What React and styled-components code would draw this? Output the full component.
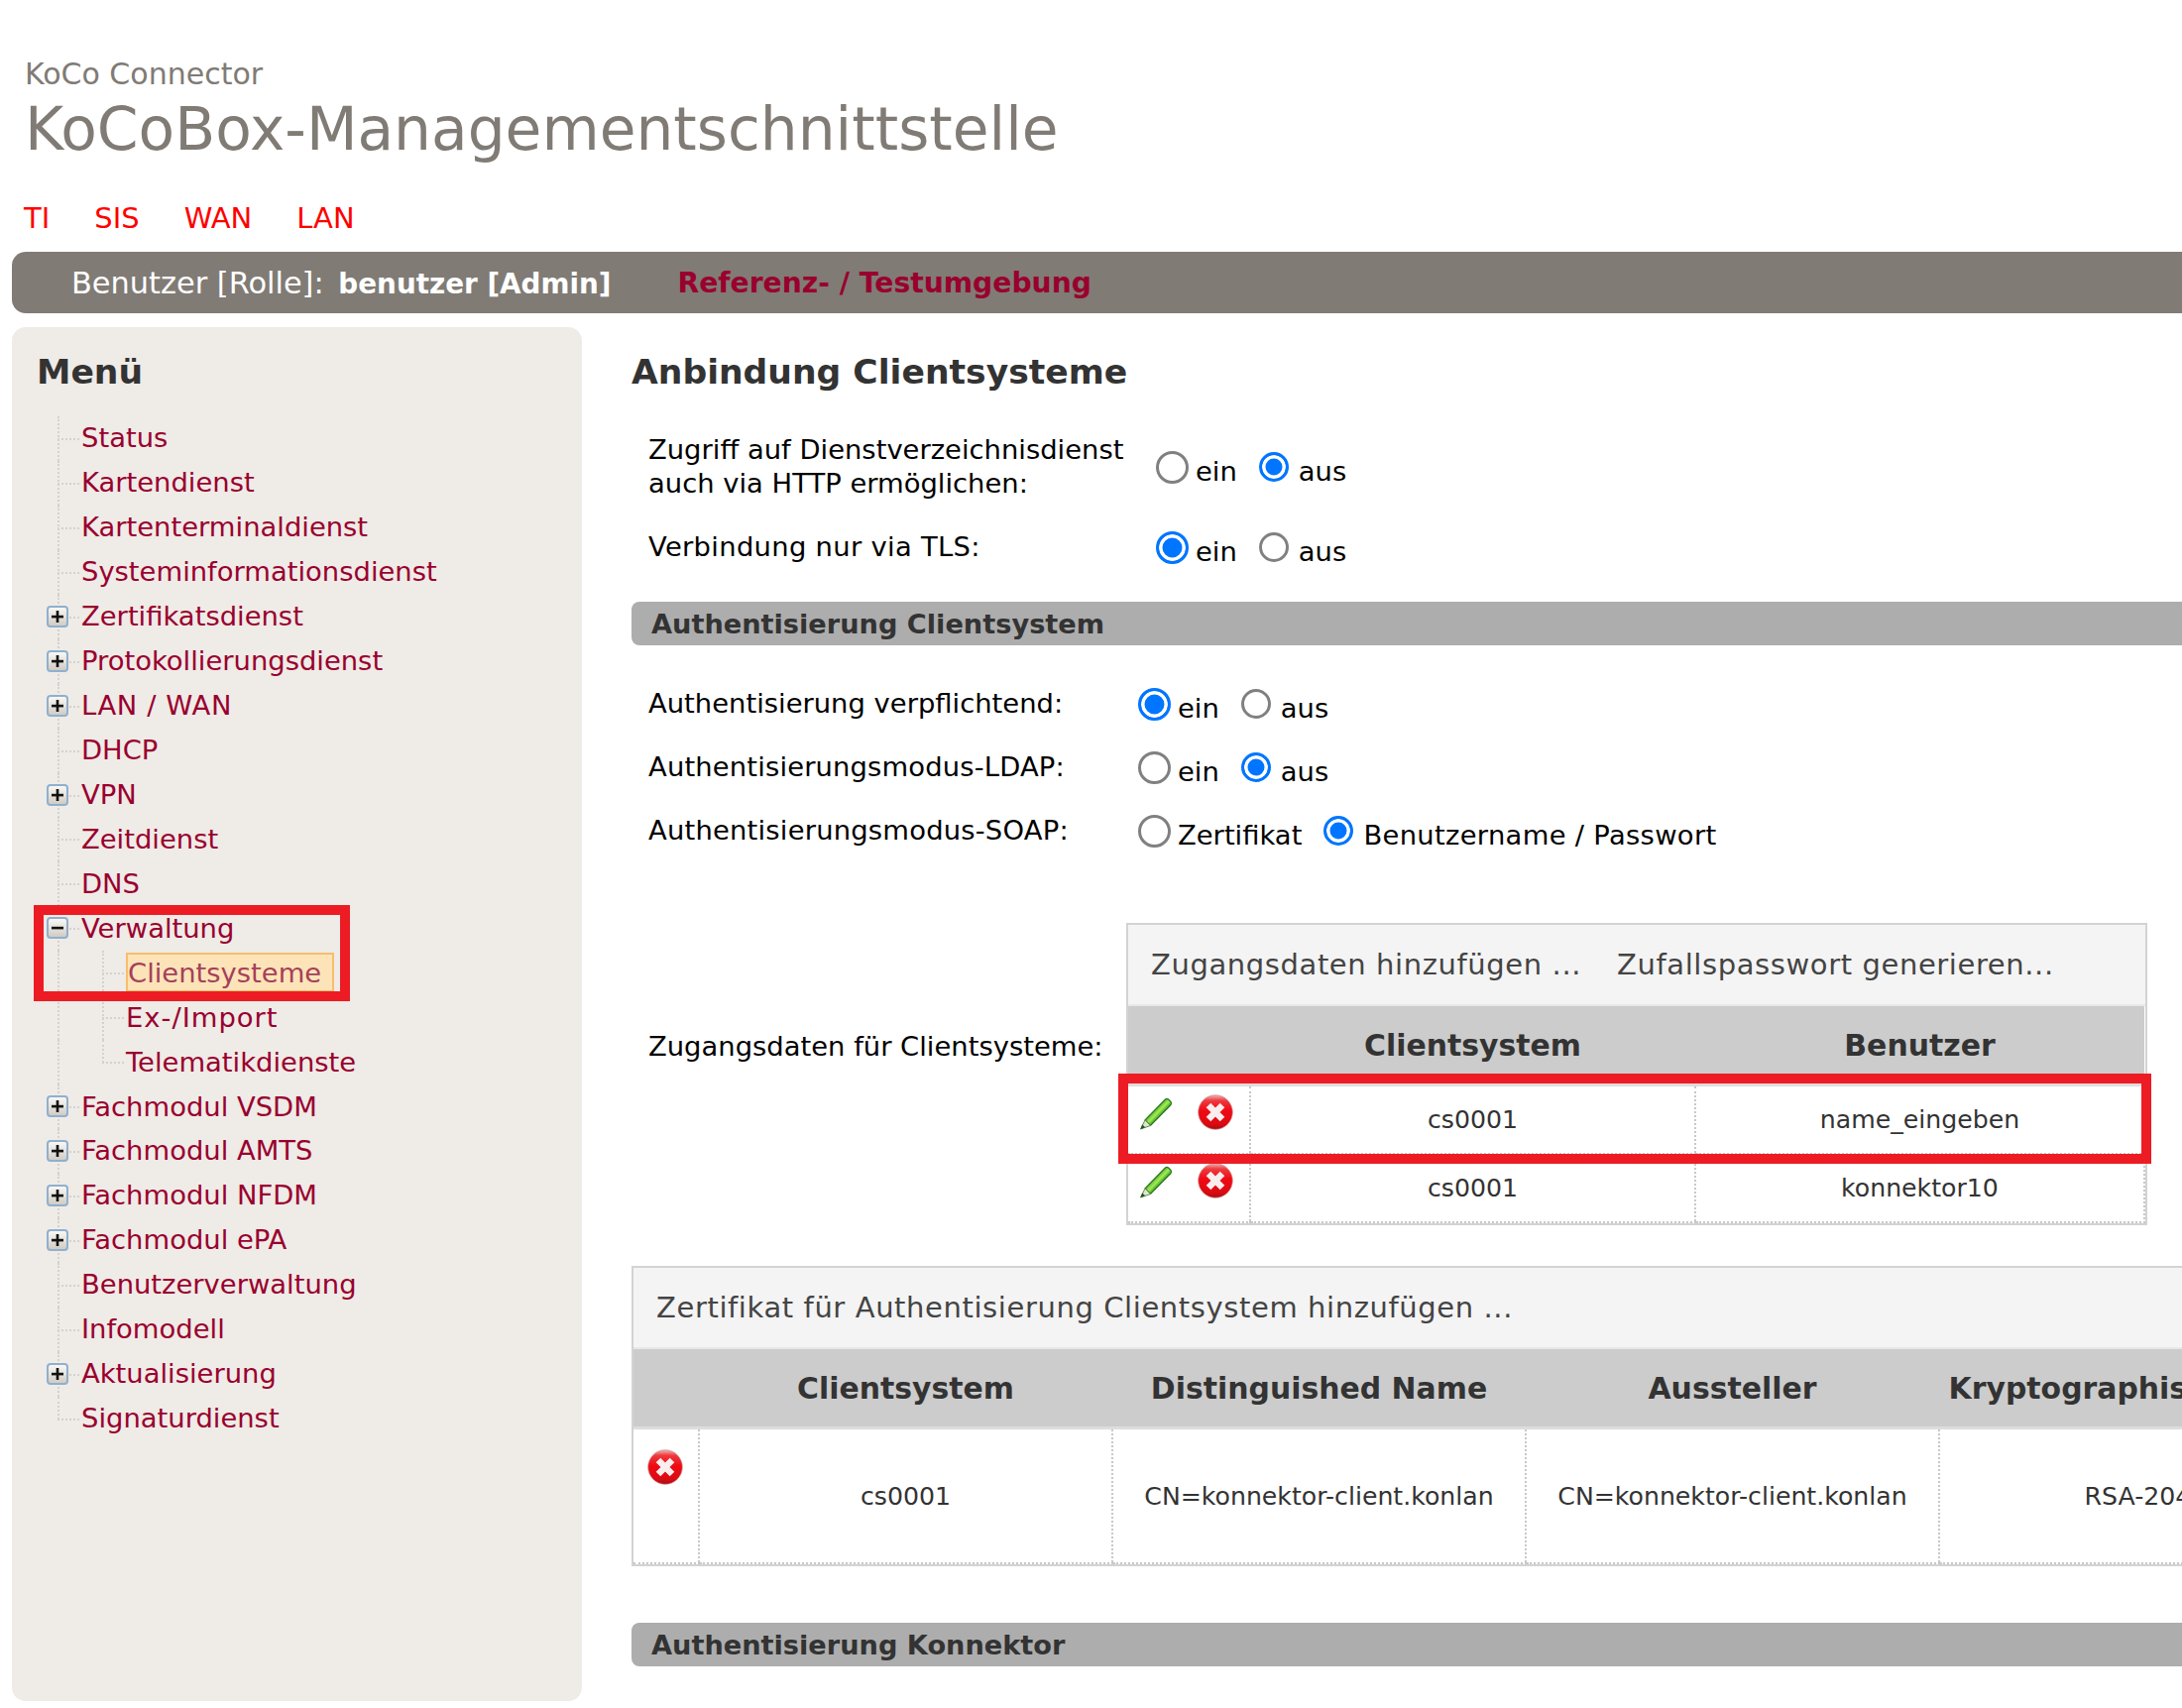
import React from 'react';
import styled, { createGlobalStyle } from 'styled-components';

const GlobalStyle = createGlobalStyle`
  html, body {
    margin: 0;
    padding: 0;
    width: 2201px;
    height: 1723px;
    overflow: hidden;
    background: #fff;
  }
  body {
    font-family: "DejaVu Sans", Verdana, sans-serif;
    font-size: 27.4px;
    color: #000;
  }
`;

const menuItems = [
  { label: 'Status' },
  { label: 'Kartendienst' },
  { label: 'Kartenterminaldienst' },
  { label: 'Systeminformationsdienst' },
  { label: 'Zertifikatsdienst', toggle: 'plus' },
  { label: 'Protokollierungsdienst', toggle: 'plus' },
  { label: 'LAN / WAN', toggle: 'plus', track: 0.6 },
  { label: 'DHCP' },
  { label: 'VPN', toggle: 'plus' },
  { label: 'Zeitdienst' },
  { label: 'DNS' },
  { label: 'Verwaltung', toggle: 'minus' },
  { label: 'Clientsysteme', sub: true, active: true },
  { label: 'Ex-/Import', sub: true, track: 1 },
  { label: 'Telematikdienste', sub: true, last: true },
  { label: 'Fachmodul VSDM', toggle: 'plus' },
  { label: 'Fachmodul AMTS', toggle: 'plus' },
  { label: 'Fachmodul NFDM', toggle: 'plus' },
  { label: 'Fachmodul ePA', toggle: 'plus' },
  { label: 'Benutzerverwaltung' },
  { label: 'Infomodell' },
  { label: 'Aktualisierung', toggle: 'plus' },
  { label: 'Signaturdienst', end: true },
];

const ToggleIcon = ({ type }) => (
  <ToggleSvg viewBox="0 0 22 22">
    <defs>
      <linearGradient id={`tg-${type}`} x1="0" y1="0" x2="0" y2="1">
        <stop offset="0" stopColor="#fbfaf8" />
        <stop offset="1" stopColor="#cfcac0" />
      </linearGradient>
    </defs>
    <rect x="1" y="1" width="20" height="20" rx="3" fill={`url(#tg-${type})`} stroke="#8fb0cf" strokeWidth="2" />
    <rect x="5" y="9.8" width="12" height="2.6" fill="#111" />
    {type === 'plus' && <rect x="9.7" y="5" width="2.6" height="12" fill="#111" />}
  </ToggleSvg>
);

const PencilIcon = () => (
  <IconSvg $w={34} $h={34} viewBox="0 0 34 34">
    <defs>
      <linearGradient id="pencil-body" x1="0.2" y1="0.2" x2="0.8" y2="0.8">
        <stop offset="0.3" stopColor="#54b52a" />
        <stop offset="0.5" stopColor="#a4ea58" />
        <stop offset="0.7" stopColor="#2f9a18" />
      </linearGradient>
    </defs>
    <path d="M6 24 L26.5 3 Q28 1.6 29.5 3 L32 5.5 Q33.2 7 32 8.5 L11.5 29.5 Z" fill="url(#pencil-body)" stroke="#27791c" strokeWidth="1.2" />
    <path d="M6 24 L11.5 29.5 L1.5 33 Z" fill="#dfe6cc" stroke="#5d8a52" strokeWidth="1" />
    <path d="M1.5 33 L3.2 28.4 L6.2 31.3 Z" fill="#234f1c" />
  </IconSvg>
);

const DeleteIcon = () => (
  <IconSvg $w={36} $h={36} viewBox="0 0 36 36">
    <defs>
      <linearGradient id="del-fill" x1="0" y1="0" x2="0" y2="1">
        <stop offset="0" stopColor="#f3b4b4" />
        <stop offset="0.16" stopColor="#ee3a3f" />
        <stop offset="0.45" stopColor="#f00a14" />
        <stop offset="0.85" stopColor="#dc0a12" />
        <stop offset="1" stopColor="#a50d12" />
      </linearGradient>
    </defs>
    <circle cx="18" cy="18" r="17.3" fill="url(#del-fill)" stroke="#c98d8d" strokeWidth="0.7" />
    <path d="M11 11 L25 25 M25 11 L11 25" stroke="#f8eeee" strokeWidth="6.5" strokeLinecap="butt" />
  </IconSvg>
);

const RadioRow = ({ name, first, second, firstChecked, track }) => (
  <RadioGroup>
    <RadioLabel $gap={7}>
      <Radio $size={33} type="radio" name={name} defaultChecked={firstChecked} />
      <RadioText>{first}</RadioText>
    </RadioLabel>
    <RadioLabel $gap={10}>
      <Radio $size={30} type="radio" name={name} defaultChecked={!firstChecked} />
      <RadioText $track={track}>{second}</RadioText>
    </RadioLabel>
  </RadioGroup>
);

const credentials = ['name_eingeben', 'konnektor10'];

export default function App() {
  return (
    <Page>
      <GlobalStyle />
      <Header>
        <SubTitle>KoCo Connector</SubTitle>
        <Title>KoCoBox-Managementschnittstelle</Title>
      </Header>

      <TopNav>
        <TopLink>TI</TopLink>
        <TopLink>SIS</TopLink>
        <TopLink>WAN</TopLink>
        <TopLink>LAN</TopLink>
      </TopNav>

      <UserBar>
        <UserInfo>
          Benutzer [Rolle]: <UserName>benutzer [Admin]</UserName>
        </UserInfo>
        <Environment>Referenz- / Testumgebung</Environment>
      </UserBar>

      <Columns>
        <Sidebar>
          <MenuTitle>Menü</MenuTitle>
          <Tree>
            {menuItems.map((item) => (
              <TreeRow key={item.label} $sub={item.sub} $end={item.end}>
                {item.sub && <SubLine $last={item.last} />}
                {item.toggle && <ToggleIcon type={item.toggle} />}
                <TreeLink $active={item.active} $track={item.track}>{item.label}</TreeLink>
              </TreeRow>
            ))}
            <Callout $left={34} $top={913} $width={319} $height={97} />
          </Tree>
        </Sidebar>

        <Main>
          <PageTitle>Anbindung Clientsysteme</PageTitle>

          <Form $top={39}>
            <FormRow $label={512} $height={68}>
              <FieldLabel>
                Zugriff auf Dienstverzeichnisdienst
                <br />
                auch via HTTP ermöglichen:
              </FieldLabel>
              <RadioRow name="http" first="ein" second="aus" firstChecked={false} />
            </FormRow>
            <FormRow $label={512}>
              <FieldLabel $track={0.3}>Verbindung nur via TLS:</FieldLabel>
              <RadioRow name="tls" first="ein" second="aus" firstChecked />
            </FormRow>
          </Form>

          <SectionBar $top={38}>Authentisierung Clientsystem</SectionBar>

          <Form $top={42}>
            <FormRow $label={494}>
              <FieldLabel>Authentisierung verpflichtend:</FieldLabel>
              <RadioRow name="auth" first="ein" second="aus" firstChecked />
            </FormRow>
            <FormRow $label={494}>
              <FieldLabel $track={0.15}>Authentisierungsmodus-LDAP:</FieldLabel>
              <RadioRow name="ldap" first="ein" second="aus" firstChecked={false} />
            </FormRow>
            <FormRow $label={494}>
              <FieldLabel $track={0.2}>Authentisierungsmodus-SOAP:</FieldLabel>
              <RadioRow name="soap" first="Zertifikat" second="Benutzername / Passwort" firstChecked={false} track={0.3} />
            </FormRow>
          </Form>

          <CredentialsRow>
            <CredentialsLabel>Zugangsdaten für Clientsysteme:</CredentialsLabel>
            <CredentialsWrap>
              <Toolbar>
                <ToolButton>Zugangsdaten hinzufügen ...</ToolButton>
                <ToolButton>Zufallspasswort generieren...</ToolButton>
              </Toolbar>
              <Grid>
                <colgroup>
                  <col width="123" />
                  <col width="449" />
                  <col />
                </colgroup>
                <thead>
                  <tr>
                    <HeadCell />
                    <HeadCell>Clientsystem</HeadCell>
                    <HeadCell>Benutzer</HeadCell>
                  </tr>
                </thead>
                <tbody>
                  {credentials.map((user) => (
                    <tr key={user}>
                      <ActionCell $top={8} $left={11}>
                        <PencilIcon />
                        <DeleteIcon />
                      </ActionCell>
                      <BodyCell $height={67}>cs0001</BodyCell>
                      <BodyCell $height={67}>{user}</BodyCell>
                    </tr>
                  ))}
                </tbody>
              </Grid>
              <Callout $left={-10} $top={150} $width={1042} $height={91} />
            </CredentialsWrap>
          </CredentialsRow>

          <CertificateBox>
            <Toolbar>
              <ToolButton>Zertifikat für Authentisierung Clientsystem hinzufügen ...</ToolButton>
            </Toolbar>
            <Grid>
              <colgroup>
                <col width="66" />
                <col width="417" />
                <col width="417" />
                <col width="417" />
                <col width="417" />
              </colgroup>
              <thead>
                <tr>
                  <HeadCell />
                  <HeadCell>Clientsystem</HeadCell>
                  <HeadCell>Distinguished Name</HeadCell>
                  <HeadCell>Aussteller</HeadCell>
                  <HeadCell>Kryptographische Suite</HeadCell>
                </tr>
              </thead>
              <tbody>
                <tr>
                  <ActionCell $top={20} $left={14}>
                    <DeleteIcon />
                  </ActionCell>
                  <BodyCell $height={134}>cs0001</BodyCell>
                  <BodyCell $height={134}>CN=konnektor-client.konlan</BodyCell>
                  <BodyCell $height={134}>CN=konnektor-client.konlan</BodyCell>
                  <BodyCell $height={134}>RSA-2048</BodyCell>
                </tr>
              </tbody>
            </Grid>
          </CertificateBox>

          <SectionBar $top={57}>Authentisierung Konnektor</SectionBar>
        </Main>
      </Columns>
    </Page>
  );
}

const Page = styled.div`
  position: relative;
  width: 2201px;
  height: 1723px;
  overflow: hidden;
  box-sizing: border-box;
  padding: 55px 0 0 12px;
`;

const Header = styled.header`
  padding-left: 13px;
  color: #807b75;
`;

const SubTitle = styled.div`
  font-size: 30px;
  line-height: 40px;
`;

const Title = styled.h1`
  margin: 0;
  font-size: 59.8px;
  font-weight: 400;
  line-height: 70px;
`;

const TopNav = styled.nav`
  display: flex;
  gap: 45px;
  margin-top: 35px;
  padding-left: 12px;
  height: 40px;
  align-items: center;
`;

const TopLink = styled.a`
  color: #ff0000;
  font-size: 29px;
  line-height: 40px;
`;

const UserBar = styled.div`
  display: flex;
  align-items: center;
  gap: 67px;
  width: 2400px;
  height: 62px;
  margin-top: 14px;
  padding-left: 60px;
  box-sizing: border-box;
  background: #807b75;
  border-radius: 14px 0 0 14px;
`;

const UserInfo = styled.span`
  color: #fff;
  font-size: 30.4px;
`;

const UserName = styled.strong`
  margin-left: 5px;
  font-size: 27.8px;
`;

const Environment = styled.strong`
  color: #99002e;
  font-size: 28.2px;
`;

const Columns = styled.div`
  display: flex;
  gap: 50px;
  margin-top: 14px;
`;

const Sidebar = styled.aside`
  flex: none;
  width: 575px;
  height: 1386px;
  box-sizing: border-box;
  padding: 22px 0 0 25px;
  background: #efebe7;
  border-radius: 14px;
`;

const MenuTitle = styled.h2`
  margin: 0;
  font-size: 34.6px;
  line-height: 46px;
  color: #333;
  font-weight: 700;
`;

const Tree = styled.div`
  margin-top: 22px;
`;

const TreeRow = styled.div`
  position: relative;
  display: flex;
  align-items: center;
  height: 44.95px;
  padding-left: ${(p) => (p.$sub ? '90px' : '45px')};

  &::before {
    content: '';
    position: absolute;
    left: 21px;
    top: 0;
    height: ${(p) => (p.$end ? '23px' : '45px')};
    border-left: 2px dotted #d4d2cf;
  }

  &::after {
    content: '';
    position: absolute;
    left: ${(p) => (p.$sub ? '66px' : '21px')};
    width: 22px;
    top: 22px;
    border-top: 2px dotted #d4d2cf;
  }
`;

const SubLine = styled.span`
  position: absolute;
  left: 66px;
  top: 0;
  height: ${(p) => (p.$last ? '23px' : '45px')};
  border-left: 2px dotted #d4d2cf;
`;

const TreeLink = styled.a`
  position: relative;
  z-index: 1;
  box-sizing: border-box;
  color: ${(p) => (p.$active ? '#a5405a' : '#99002e')};
  letter-spacing: ${(p) => p.$track || 0}px;
  line-height: 36px;
  ${(p) =>
    p.$active
      ? `
    width: 210px;
    height: 40px;
    margin-top: -1px;
    background: #fde4b8;
    border: 2px solid #f8bd6c;
    line-height: 38px;
  `
      : ''}
`;

const ToggleSvg = styled.svg`
  position: absolute;
  z-index: 1;
  left: 10px;
  top: 11px;
  width: 22px;
  height: 22px;
`;

const IconSvg = styled.svg`
  flex: none;
  width: ${(p) => p.$w}px;
  height: ${(p) => p.$h}px;
`;

const Callout = styled.div`
  position: absolute;
  z-index: 5;
  left: ${(p) => p.$left}px;
  top: ${(p) => p.$top}px;
  width: ${(p) => p.$width}px;
  height: ${(p) => p.$height}px;
  box-sizing: border-box;
  border: 10px solid #ed1c24;
`;

const Main = styled.main`
  flex: none;
  width: 1800px;
`;

const PageTitle = styled.h2`
  margin: 22px 0 0;
  font-size: 34.6px;
  line-height: 46px;
  color: #333;
  font-weight: 700;
`;

const Form = styled.div`
  display: flex;
  flex-direction: column;
  gap: 30px;
  margin-top: ${(p) => p.$top}px;
  padding-left: 17px;
`;

const FormRow = styled.div`
  display: grid;
  grid-template-columns: ${(p) => p.$label}px 1fr;
  align-items: center;
  min-height: ${(p) => p.$height || 34}px;
`;

const FieldLabel = styled.div`
  line-height: 34px;
  letter-spacing: ${(p) => p.$track || 0}px;
`;

const RadioGroup = styled.div`
  display: flex;
  align-items: center;
`;

const RadioLabel = styled.label`
  display: flex;
  align-items: center;
  gap: ${(p) => p.$gap}px;
  margin-right: 22px;
`;

const Radio = styled.input`
  appearance: none;
  box-sizing: border-box;
  width: ${(p) => p.$size}px;
  height: ${(p) => p.$size}px;
  margin: 0;
  border: 3px solid #808080;
  border-radius: 50%;
  background: #fff;

  &:checked {
    border-color: #0075ff;
    background: #0075ff;
    box-shadow: inset 0 0 0 3.5px #fff;
  }
`;

const RadioText = styled.span`
  padding-top: 10px;
  line-height: 24px;
  letter-spacing: ${(p) => p.$track || 0}px;
`;

const SectionBar = styled.h3`
  margin: ${(p) => p.$top}px 0 0;
  height: 44px;
  width: 1800px;
  box-sizing: border-box;
  padding-left: 20px;
  background: #adadad;
  border-radius: 8px 0 0 8px;
  color: #333;
  font-size: 27.2px;
  line-height: 45px;
  font-weight: 700;
`;

const CredentialsRow = styled.div`
  display: grid;
  grid-template-columns: 482px 1030px;
  align-items: start;
  margin-top: 76px;
  padding-left: 17px;
`;

const CredentialsLabel = styled(FieldLabel)`
  margin-top: 108px;
`;

const CredentialsWrap = styled.div`
  position: relative;
  box-sizing: border-box;
  border: 2px solid #d3d3d3;
`;

const CertificateBox = styled.div`
  width: 1738px;
  margin-top: 41px;
  box-sizing: border-box;
  border: 2px solid #d3d3d3;
`;

const Toolbar = styled.div`
  display: flex;
  align-items: center;
  gap: 36px;
  height: 80px;
  padding-left: 23px;
  background: #f4f4f4;
  border-bottom: 2px solid #e8e8e8;
`;

const ToolButton = styled.span`
  color: #444;
  font-size: 29px;
  letter-spacing: 0.6px;
`;

const Grid = styled.table`
  width: 100%;
  table-layout: fixed;
  border-collapse: collapse;
  color: #333;
`;

const HeadCell = styled.th`
  height: 78px;
  padding: 0;
  background: #ccc;
  border-bottom: 3px solid #ddd;
  color: #333;
  font-size: 29.9px;
  font-weight: 700;
  white-space: nowrap;
`;

const BodyCell = styled.td`
  height: ${(p) => p.$height}px;
  padding: 0;
  text-align: center;
  font-size: 25.2px;
  white-space: nowrap;
  border-left: 2px dotted #c8c8c8;
  border-bottom: 2px dotted #c8c8c8;

  &:last-child {
    border-right: 2px dotted #c8c8c8;
  }
`;

const ActionCell = styled.td`
  padding: ${(p) => p.$top}px 0 0 ${(p) => p.$left}px;
  vertical-align: top;
  border-bottom: 2px dotted #c8c8c8;

  svg + svg {
    margin-left: 25px;
  }
`;
